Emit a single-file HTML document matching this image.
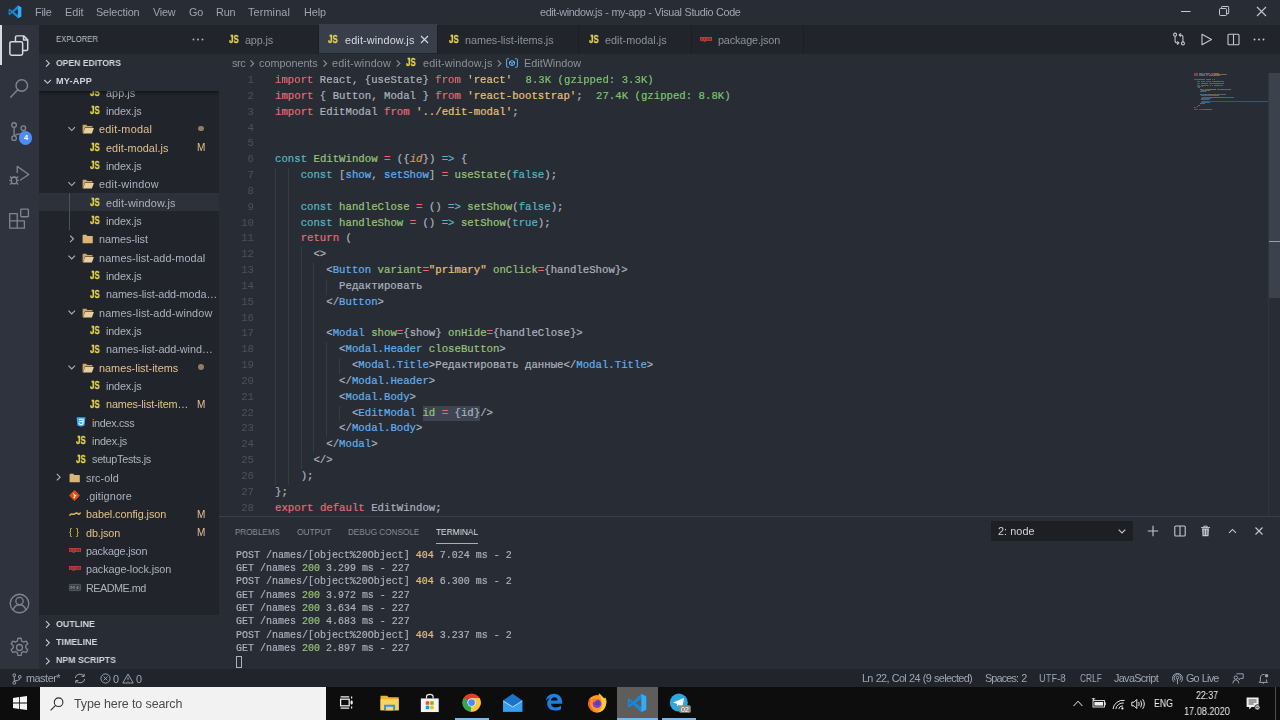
<!DOCTYPE html><html lang="en"><head><meta charset="utf-8"><title>edit-window.js - my-app - Visual Studio Code</title><style>

*{box-sizing:border-box;margin:0;padding:0}
html,body{width:1280px;height:720px;overflow:hidden;background:#282c34}
body{position:relative;font-family:"Liberation Sans",sans-serif;font-size:10.83px;color:#abb2bf;-webkit-font-smoothing:antialiased}
.abs{position:absolute}
.t{position:absolute;white-space:pre;line-height:1;will-change:transform}
.mono{font-family:"Liberation Mono",monospace}
#title{left:0;top:0;width:1280px;height:24.5px;background:#282c34}
#act{left:0;top:24.5px;width:39.4px;height:644.5px;background:#2f333d}
#side{left:39.4px;top:24.5px;width:179.6px;height:644.5px;background:#21252b;overflow:hidden}
#tabs{left:219px;top:24.5px;width:1061px;height:29.2px;background:#21252b}
#crumbs{left:219px;top:53.7px;width:1061px;height:18.8px;background:#282c34}
#editor{left:219px;top:72.5px;width:1061px;height:444px;background:#282c34;overflow:hidden}
#panel{left:219px;top:516px;width:1061px;height:153px;background:#282c34;border-top:1px solid #3a3f4b}
#status{left:0;top:669px;width:1280px;height:17.7px;background:#21252b}
#task{left:0;top:686.7px;width:1280px;height:33.3px;background:#0d0d0d}
.row{position:absolute;left:0;width:179px;height:18.33px}
.cl{-webkit-text-stroke:0.22px currentColor;position:absolute;left:0;height:15.83px;line-height:15.83px;white-space:pre;font-family:"Liberation Mono",monospace;font-size:11.4px;transform-origin:0 0}
.ln{position:absolute;height:15.83px;line-height:15.83px;white-space:pre;font-family:"Liberation Mono",monospace;font-size:11.4px;color:#495162;transform-origin:100% 0;text-align:right}
.k{color:#e06c75}.c{color:#56b6c2}.g{color:#98c379}.b{color:#61afef}.y{color:#e5c07b}.o{color:#d19a66;font-style:italic}.ic{color:#7cc36e}
.tl{-webkit-text-stroke:0.18px currentColor;position:absolute;left:0;height:13.33px;line-height:13.33px;white-space:pre;font-family:"Liberation Mono",monospace;font-size:11.2px;transform-origin:0 0;color:#abb2bf}
svg{position:absolute;overflow:visible}

</style></head><body>
<div id="title" class="abs">
<svg style="left:7.6px;top:5.4px" width="13.8" height="13.8" viewBox="0 0 100 100"><path d="M71 4 L30 42 L12 28 L4 32 L4 68 L12 72 L30 58 L71 96 L96 84 L96 16 Z M72 29 L72 71 L43 50 Z M12 40 L23 50 L12 60 Z" fill="#1b86d6" fill-rule="evenodd"/><path d="M72 4.5 L96 16 V84 L72 95.5 Z" fill="#33abf6"/></svg>
<span class="t" style="left:35.00px;top:4.62px;font-size:10.83px;line-height:14.08px;color:#9da5b4;letter-spacing:-0.237px;">File</span>
<span class="t" style="left:64.50px;top:4.62px;font-size:10.83px;line-height:14.08px;color:#9da5b4;letter-spacing:-0.040px;">Edit</span>
<span class="t" style="left:96.00px;top:4.62px;font-size:10.83px;line-height:14.08px;color:#9da5b4;letter-spacing:-0.117px;">Selection</span>
<span class="t" style="left:153.00px;top:4.62px;font-size:10.83px;line-height:14.08px;color:#9da5b4;letter-spacing:-0.194px;">View</span>
<span class="t" style="left:189.00px;top:4.62px;font-size:10.83px;line-height:14.08px;color:#9da5b4;letter-spacing:-0.223px;">Go</span>
<span class="t" style="left:216.00px;top:4.62px;font-size:10.83px;line-height:14.08px;color:#9da5b4;letter-spacing:-0.122px;">Run</span>
<span class="t" style="left:248.00px;top:4.62px;font-size:10.83px;line-height:14.08px;color:#9da5b4;letter-spacing:0.135px;">Terminal</span>
<span class="t" style="left:303.50px;top:4.62px;font-size:10.83px;line-height:14.08px;color:#9da5b4;letter-spacing:-0.068px;">Help</span>
<span class="t" style="left:539.50px;top:4.62px;font-size:10.83px;line-height:14.08px;color:#9da5b4;letter-spacing:-0.373px;word-spacing:0.373px;">edit-window.js - my-app - Visual Studio Code</span>
<svg style="left:1180px;top:6px" width="90" height="12" viewBox="0 0 90 12" fill="none" stroke="#c5c8ce" stroke-width="1"><path d="M1 5.5 H10.5"/><rect x="39.5" y="2.5" width="7" height="7" rx="1"/><path d="M41.5 2.5 V1.2 q0 -0.7 0.7 -0.7 H48 q0.7 0 0.7 0.7 V7 q0 0.7 -0.7 0.7 H46.5"/><path d="M77 1 L86 10 M86 1 L77 10" stroke-width="1.1"/></svg>
</div>
<div id="act" class="abs">
<div class="abs" style="left:0;top:0;width:1.7px;height:40px;background:#d7dae0"></div>
<svg style="left:8.7px;top:10.00px" width="21" height="21" viewBox="0 0 24 24" fill="none" stroke="#d7dae0" stroke-width="1.7" stroke-linejoin="round"><path d="M7.4 7.6 V2.6 q0 -1.6 1.6 -1.6 H16.8 L21.4 5.6 V16.2 q0 1.6 -1.6 1.6 H16"/><path d="M16.6 1.2 V5.8 H21.2"/><rect x="1" y="7.8" width="14.6" height="15.4" rx="2"/></svg>
<svg style="left:8.7px;top:53.33px" width="21" height="21" viewBox="0 0 24 24" fill="none" stroke="#7f8591" stroke-width="1.6"><circle cx="14.6" cy="8.6" r="6.6"/><path d="M10 13.4 L1.6 22.4"/></svg>
<svg style="left:8.7px;top:96.67px" width="21" height="21" viewBox="0 0 24 24" fill="none" stroke="#7f8591" stroke-width="1.5"><circle cx="5.8" cy="4.6" r="2.6"/><circle cx="5.8" cy="19.6" r="2.6"/><circle cx="16.4" cy="8.2" r="2.6"/><path d="M5.8 7.2 V17 M16.4 10.8 q0 3.6 -5 4.2 q-5 0.6 -5.6 2.4"/></svg>
<div class="abs" style="left:19.0px;top:106.80px;width:13.4px;height:13.4px;border-radius:7px;background:#4d8df5"></div>
<span class="t" style="left:23.50px;top:108.75px;font-size:7.6px;line-height:9.88px;color:#ffffff;letter-spacing:0.000px;font-weight:bold;">4</span>
<svg style="left:8.7px;top:140.00px" width="21" height="21" viewBox="0 0 24 24" fill="none" stroke="#7f8591" stroke-width="1.5" stroke-linejoin="round"><path d="M9.4 9 V1.6 L22.6 10.8 L12.6 17.4"/><ellipse cx="5.8" cy="17.6" rx="3.2" ry="3.8"/><path d="M3.4 14.8 q2.4 -2.6 4.8 0 M2.6 17.6 H0.4 M9 17.6 H11.2 M3.2 15.2 L1.2 13.2 M8.4 15.2 L10.4 13.2 M3.2 20.2 L1.2 22.2 M8.4 20.2 L10.4 22.2"/></svg>
<svg style="left:8.7px;top:183.33px" width="21" height="21" viewBox="0 0 24 24" fill="none" stroke="#7f8591" stroke-width="1.5" stroke-linejoin="round"><path d="M0.8 6.4 H9.4 V23 H0.8 Z M0.8 14.8 H17.6 V23 H9.4"/><rect x="13.4" y="1.2" width="8.8" height="8.8" rx="0.8"/></svg>
<svg style="left:8.7px;top:568.2px" width="21" height="21" viewBox="0 0 24 24" fill="none" stroke="#7f8591" stroke-width="1.5"><circle cx="12" cy="12" r="10.6"/><circle cx="12" cy="9.2" r="4.2"/><path d="M4.6 19.4 q2 -6 7.4 -6 q5.4 0 7.4 6"/></svg>
<svg style="left:8.7px;top:612px" width="21" height="21" viewBox="0 0 24 24" fill="none" stroke="#7f8591" stroke-width="1.5" stroke-linejoin="round"><circle cx="12" cy="12" r="3.4"/><path d="M10.2 1.4 h3.6 l0.7 3.2 l2.1 1.2 l3.1 -1.1 l1.8 3.1 l-2.4 2.2 v2.4 l2.4 2.2 l-1.8 3.1 l-3.1 -1.1 l-2.1 1.2 l-0.7 3.2 h-3.6 l-0.7 -3.2 l-2.1 -1.2 l-3.1 1.1 l-1.8 -3.1 l2.4 -2.2 v-2.4 l-2.4 -2.2 l1.8 -3.1 l3.1 1.1 l2.1 -1.2 z"/></svg>
</div>
<div id="side" class="abs"><div class="abs" style="left:-39.4px;top:-24.5px;width:1280px;height:720px">
<span class="t" style="left:89.80px;top:85.85px;font-size:10.2px;line-height:13.26px;color:#e6d64c;font-weight:bold;-webkit-text-stroke:0.3px #e6d64c;transform:scaleX(0.778);transform-origin:0 50%">JS</span>
<span class="t" style="left:105.80px;top:85.69px;font-size:10.83px;line-height:14.08px;color:#abb2bf;letter-spacing:0.050px;">app.js</span>
<span class="t" style="left:89.80px;top:104.19px;font-size:10.2px;line-height:13.26px;color:#e6d64c;font-weight:bold;-webkit-text-stroke:0.3px #e6d64c;transform:scaleX(0.778);transform-origin:0 50%">JS</span>
<span class="t" style="left:105.80px;top:104.02px;font-size:10.83px;line-height:14.08px;color:#abb2bf;letter-spacing:-0.159px;">index.js</span>
<svg style="left:0;top:0" width="1" height="1"><path d="M68.43 127.23 L71.73 130.53 L75.03 127.23" fill="none" stroke="#abb2bf" stroke-width="1.1"/></svg>
<svg style="left:82.33px;top:124.23px" width="12" height="10" viewBox="0 0 12 10"><path d="M0.6 9.2 V1.3 q0 -0.5 0.5 -0.5 H4.3 l1 1.1 H10 q0.5 0 0.5 0.5 V3.4 H3 L0.9 9.2 Z" fill="#c9a76a"/><path d="M3.1 4 H11.9 L9.9 9.4 H1 Z" fill="#e8cf9c"/></svg>
<span class="t" style="left:99.13px;top:122.36px;font-size:10.83px;line-height:14.08px;color:#e2c08d;letter-spacing:0.261px;">edit-modal</span>
<div class="abs" style="left:198.3px;top:125.83px;width:5.6px;height:5.6px;border-radius:3px;background:#8f7d5f"></div>
<span class="t" style="left:89.80px;top:140.85px;font-size:10.2px;line-height:13.26px;color:#e6d64c;font-weight:bold;-webkit-text-stroke:0.3px #e6d64c;transform:scaleX(0.778);transform-origin:0 50%">JS</span>
<span class="t" style="left:105.80px;top:140.69px;font-size:10.83px;line-height:14.08px;color:#e2c08d;letter-spacing:0.093px;">edit-modal.js</span>
<span class="t" style="left:196.50px;top:140.98px;font-size:10.0px;line-height:13.00px;color:#e2c08d;letter-spacing:0.670px;">M</span>
<span class="t" style="left:89.80px;top:159.19px;font-size:10.2px;line-height:13.26px;color:#e6d64c;font-weight:bold;-webkit-text-stroke:0.3px #e6d64c;transform:scaleX(0.778);transform-origin:0 50%">JS</span>
<span class="t" style="left:105.80px;top:159.02px;font-size:10.83px;line-height:14.08px;color:#abb2bf;letter-spacing:-0.159px;">index.js</span>
<svg style="left:0;top:0" width="1" height="1"><path d="M68.43 182.23 L71.73 185.53 L75.03 182.23" fill="none" stroke="#abb2bf" stroke-width="1.1"/></svg>
<svg style="left:82.33px;top:179.23px" width="12" height="10" viewBox="0 0 12 10"><path d="M0.6 9.2 V1.3 q0 -0.5 0.5 -0.5 H4.3 l1 1.1 H10 q0.5 0 0.5 0.5 V3.4 H3 L0.9 9.2 Z" fill="#c9a76a"/><path d="M3.1 4 H11.9 L9.9 9.4 H1 Z" fill="#e8cf9c"/></svg>
<span class="t" style="left:99.13px;top:177.36px;font-size:10.83px;line-height:14.08px;color:#abb2bf;letter-spacing:0.244px;">edit-window</span>
<div class="abs" style="left:39.4px;top:193.00px;width:179.6px;height:18.33px;background:#2c313a"></div>
<span class="t" style="left:89.80px;top:195.85px;font-size:10.2px;line-height:13.26px;color:#e6d64c;font-weight:bold;-webkit-text-stroke:0.3px #e6d64c;transform:scaleX(0.778);transform-origin:0 50%">JS</span>
<span class="t" style="left:105.80px;top:195.69px;font-size:10.83px;line-height:14.08px;color:#abb2bf;letter-spacing:0.163px;">edit-window.js</span>
<span class="t" style="left:89.80px;top:214.18px;font-size:10.2px;line-height:13.26px;color:#e6d64c;font-weight:bold;-webkit-text-stroke:0.3px #e6d64c;transform:scaleX(0.778);transform-origin:0 50%">JS</span>
<span class="t" style="left:105.80px;top:214.02px;font-size:10.83px;line-height:14.08px;color:#abb2bf;letter-spacing:-0.159px;">index.js</span>
<svg style="left:0;top:0" width="1" height="1"><path d="M70.13 235.53 L73.43 238.83 L70.13 242.13" fill="none" stroke="#abb2bf" stroke-width="1.1"/></svg>
<svg style="left:82.33px;top:234.23px" width="12" height="10" viewBox="0 0 12 10"><path d="M0.6 9.3 V1.3 q0 -0.5 0.5 -0.5 H4.3 l1 1.1 H10.3 q0.5 0 0.5 0.5 V9.3 Z" fill="#d9b577"/></svg>
<span class="t" style="left:99.13px;top:232.35px;font-size:10.83px;line-height:14.08px;color:#abb2bf;letter-spacing:-0.048px;">names-list</span>
<svg style="left:0;top:0" width="1" height="1"><path d="M68.43 255.56 L71.73 258.86 L75.03 255.56" fill="none" stroke="#abb2bf" stroke-width="1.1"/></svg>
<svg style="left:82.33px;top:252.56px" width="12" height="10" viewBox="0 0 12 10"><path d="M0.6 9.2 V1.3 q0 -0.5 0.5 -0.5 H4.3 l1 1.1 H10 q0.5 0 0.5 0.5 V3.4 H3 L0.9 9.2 Z" fill="#c9a76a"/><path d="M3.1 4 H11.9 L9.9 9.4 H1 Z" fill="#e8cf9c"/></svg>
<span class="t" style="left:99.13px;top:250.69px;font-size:10.83px;line-height:14.08px;color:#abb2bf;letter-spacing:0.112px;">names-list-add-modal</span>
<span class="t" style="left:89.80px;top:269.18px;font-size:10.2px;line-height:13.26px;color:#e6d64c;font-weight:bold;-webkit-text-stroke:0.3px #e6d64c;transform:scaleX(0.778);transform-origin:0 50%">JS</span>
<span class="t" style="left:105.80px;top:269.02px;font-size:10.83px;line-height:14.08px;color:#abb2bf;letter-spacing:-0.159px;">index.js</span>
<span class="t" style="left:89.80px;top:287.52px;font-size:10.2px;line-height:13.26px;color:#e6d64c;font-weight:bold;-webkit-text-stroke:0.3px #e6d64c;transform:scaleX(0.778);transform-origin:0 50%">JS</span>
<span class="t" style="left:105.80px;top:287.35px;font-size:10.83px;line-height:14.08px;color:#abb2bf;letter-spacing:-0.067px;">names-list-add-moda…</span>
<svg style="left:0;top:0" width="1" height="1"><path d="M68.43 310.56 L71.73 313.86 L75.03 310.56" fill="none" stroke="#abb2bf" stroke-width="1.1"/></svg>
<svg style="left:82.33px;top:307.56px" width="12" height="10" viewBox="0 0 12 10"><path d="M0.6 9.2 V1.3 q0 -0.5 0.5 -0.5 H4.3 l1 1.1 H10 q0.5 0 0.5 0.5 V3.4 H3 L0.9 9.2 Z" fill="#c9a76a"/><path d="M3.1 4 H11.9 L9.9 9.4 H1 Z" fill="#e8cf9c"/></svg>
<span class="t" style="left:99.13px;top:305.69px;font-size:10.83px;line-height:14.08px;color:#abb2bf;letter-spacing:0.125px;">names-list-add-window</span>
<span class="t" style="left:89.80px;top:324.18px;font-size:10.2px;line-height:13.26px;color:#e6d64c;font-weight:bold;-webkit-text-stroke:0.3px #e6d64c;transform:scaleX(0.778);transform-origin:0 50%">JS</span>
<span class="t" style="left:105.80px;top:324.02px;font-size:10.83px;line-height:14.08px;color:#abb2bf;letter-spacing:-0.159px;">index.js</span>
<span class="t" style="left:89.80px;top:342.52px;font-size:10.2px;line-height:13.26px;color:#e6d64c;font-weight:bold;-webkit-text-stroke:0.3px #e6d64c;transform:scaleX(0.778);transform-origin:0 50%">JS</span>
<span class="t" style="left:105.80px;top:342.35px;font-size:10.83px;line-height:14.08px;color:#abb2bf;letter-spacing:-0.051px;">names-list-add-wind…</span>
<svg style="left:0;top:0" width="1" height="1"><path d="M68.43 365.56 L71.73 368.86 L75.03 365.56" fill="none" stroke="#abb2bf" stroke-width="1.1"/></svg>
<svg style="left:82.33px;top:362.56px" width="12" height="10" viewBox="0 0 12 10"><path d="M0.6 9.2 V1.3 q0 -0.5 0.5 -0.5 H4.3 l1 1.1 H10 q0.5 0 0.5 0.5 V3.4 H3 L0.9 9.2 Z" fill="#c9a76a"/><path d="M3.1 4 H11.9 L9.9 9.4 H1 Z" fill="#e8cf9c"/></svg>
<span class="t" style="left:99.13px;top:360.69px;font-size:10.83px;line-height:14.08px;color:#e2c08d;letter-spacing:0.021px;">names-list-items</span>
<div class="abs" style="left:198.3px;top:364.16px;width:5.6px;height:5.6px;border-radius:3px;background:#8f7d5f"></div>
<span class="t" style="left:89.80px;top:379.18px;font-size:10.2px;line-height:13.26px;color:#e6d64c;font-weight:bold;-webkit-text-stroke:0.3px #e6d64c;transform:scaleX(0.778);transform-origin:0 50%">JS</span>
<span class="t" style="left:105.80px;top:379.02px;font-size:10.83px;line-height:14.08px;color:#abb2bf;letter-spacing:-0.159px;">index.js</span>
<span class="t" style="left:89.80px;top:397.51px;font-size:10.2px;line-height:13.26px;color:#e6d64c;font-weight:bold;-webkit-text-stroke:0.3px #e6d64c;transform:scaleX(0.778);transform-origin:0 50%">JS</span>
<span class="t" style="left:105.80px;top:397.35px;font-size:10.83px;line-height:14.08px;color:#e2c08d;letter-spacing:-0.128px;">names-list-item…</span>
<span class="t" style="left:196.50px;top:397.64px;font-size:10.0px;line-height:13.00px;color:#e2c08d;letter-spacing:0.670px;">M</span>
<svg style="left:75.67px;top:417.16px" width="10" height="10" viewBox="0 0 10 10"><path d="M0.6 0.3 H9.4 L8.6 8.6 L5 9.8 L1.4 8.6 Z" fill="#42a5f5"/><path d="M2.8 2.3 H7.3 L6.9 7 L5 7.6 L3.1 7 L3 5.9 M3.2 4.6 H7" fill="none" stroke="#fff" stroke-width="1"/></svg>
<span class="t" style="left:92.47px;top:415.68px;font-size:10.83px;line-height:14.08px;color:#abb2bf;letter-spacing:-0.323px;">index.css</span>
<span class="t" style="left:76.47px;top:434.18px;font-size:10.2px;line-height:13.26px;color:#e6d64c;font-weight:bold;-webkit-text-stroke:0.3px #e6d64c;transform:scaleX(0.778);transform-origin:0 50%">JS</span>
<span class="t" style="left:92.47px;top:434.02px;font-size:10.83px;line-height:14.08px;color:#abb2bf;letter-spacing:-0.211px;">index.js</span>
<span class="t" style="left:76.47px;top:452.51px;font-size:10.2px;line-height:13.26px;color:#e6d64c;font-weight:bold;-webkit-text-stroke:0.3px #e6d64c;transform:scaleX(0.778);transform-origin:0 50%">JS</span>
<span class="t" style="left:92.47px;top:452.35px;font-size:10.83px;line-height:14.08px;color:#abb2bf;letter-spacing:-0.282px;">setupTests.js</span>
<svg style="left:0;top:0" width="1" height="1"><path d="M56.80 473.86 L60.10 477.16 L56.80 480.46" fill="none" stroke="#abb2bf" stroke-width="1.1"/></svg>
<svg style="left:69.00px;top:472.56px" width="12" height="10" viewBox="0 0 12 10"><path d="M0.6 9.3 V1.3 q0 -0.5 0.5 -0.5 H4.3 l1 1.1 H10.3 q0.5 0 0.5 0.5 V9.3 Z" fill="#d9b577"/></svg>
<span class="t" style="left:85.80px;top:470.68px;font-size:10.83px;line-height:14.08px;color:#abb2bf;letter-spacing:0.030px;">src-old</span>
<svg style="left:69.00px;top:489.99px" width="11" height="11" viewBox="0 0 11 11"><rect x="1.6" y="1.6" width="7.8" height="7.8" rx="0.8" transform="rotate(45 5.5 5.5)" fill="#e64a19"/><path d="M4 3.2 L6.3 5.5 M5.3 4.5 V7.6" stroke="#fff" stroke-width="0.9" fill="none"/><circle cx="6.6" cy="5.7" r="0.8" fill="#fff"/><circle cx="5.3" cy="7.6" r="0.8" fill="#fff"/></svg>
<span class="t" style="left:85.80px;top:489.02px;font-size:10.83px;line-height:14.08px;color:#abb2bf;letter-spacing:0.145px;">.gitignore</span>
<svg style="left:69.00px;top:510.83px" width="12" height="6" viewBox="0 0 12 6"><path d="M0.5 4.6 q1.5 -2.2 3 -1.5 t2.8 -0.6 t2.6 0.2 t2.6 -1.2" fill="none" stroke="#e4c34f" stroke-width="1.5"/></svg>
<span class="t" style="left:85.80px;top:507.35px;font-size:10.83px;line-height:14.08px;color:#e2c08d;letter-spacing:-0.063px;">babel.config.json</span>
<span class="t" style="left:196.50px;top:507.64px;font-size:10.0px;line-height:13.00px;color:#e2c08d;letter-spacing:0.670px;">M</span>
<span class="t" style="left:69.30px;top:526.23px;font-size:9.6px;line-height:12.48px;color:#e5c64a;letter-spacing:0.960px;word-spacing:-0.960px;">{ }</span>
<span class="t" style="left:85.80px;top:525.68px;font-size:10.83px;line-height:14.08px;color:#e2c08d;letter-spacing:-0.103px;">db.json</span>
<span class="t" style="left:196.50px;top:525.97px;font-size:10.0px;line-height:13.00px;color:#e2c08d;letter-spacing:0.670px;">M</span>
<svg style="left:69.00px;top:548.09px" width="12" height="5" viewBox="0 0 12 5"><rect x="0" y="0" width="12" height="3.9" fill="#b83c3b"/><rect x="3.3" y="3.8" width="2.7" height="0.9" fill="#b83c3b"/><path d="M1.6 1 V3 M4.4 1 V3 M7.3 1 V3 M9 1 V3 M10.4 1 V3" stroke="#5a2426" stroke-width="0.7"/></svg>
<span class="t" style="left:85.80px;top:544.02px;font-size:10.83px;line-height:14.08px;color:#abb2bf;letter-spacing:-0.218px;">package.json</span>
<svg style="left:69.00px;top:566.42px" width="12" height="5" viewBox="0 0 12 5"><rect x="0" y="0" width="12" height="3.9" fill="#b83c3b"/><rect x="3.3" y="3.8" width="2.7" height="0.9" fill="#b83c3b"/><path d="M1.6 1 V3 M4.4 1 V3 M7.3 1 V3 M9 1 V3 M10.4 1 V3" stroke="#5a2426" stroke-width="0.7"/></svg>
<span class="t" style="left:85.80px;top:562.35px;font-size:10.83px;line-height:14.08px;color:#abb2bf;letter-spacing:-0.087px;">package-lock.json</span>
<svg style="left:69.00px;top:583.86px" width="12" height="7" viewBox="0 0 12 7"><rect x="0.4" y="0.4" width="11.2" height="6.2" rx="0.8" fill="#3c4049" stroke="#6a707c" stroke-width="0.6"/><path d="M2.2 5 V2.2 L3.6 3.8 L5 2.2 V5 M8.6 2 V4.6 M7.4 3.6 L8.6 4.9 L9.8 3.6" fill="none" stroke="#8a909c" stroke-width="0.8"/></svg>
<span class="t" style="left:85.80px;top:580.68px;font-size:10.83px;line-height:14.08px;color:#abb2bf;letter-spacing:-0.521px;">README.md</span>
<div class="abs" style="left:69.3px;top:193px;width:1px;height:36.6px;background:#4b5160"></div>
<div class="abs" style="left:39.4px;top:24.5px;width:179.6px;height:66.3px;background:#282c34;box-shadow:0 2px 3px rgba(0,0,0,0.45)"></div>
<div class="abs" style="left:39.4px;top:24.5px;width:179.6px;height:29.2px;background:#21252b"></div>
<span class="t" style="left:56.00px;top:33.46px;font-size:9.3px;line-height:12.09px;color:#bcc2cc;transform:scaleX(0.8292);transform-origin:0 50%;">EXPLORER</span>
<svg style="left:191.5px;top:37.6px" width="12" height="3" viewBox="0 0 12 3" fill="#abb2bf"><circle cx="1.5" cy="1.5" r="0.95"/><circle cx="6" cy="1.5" r="0.95"/><circle cx="10.5" cy="1.5" r="0.95"/></svg>
<svg style="left:0;top:0" width="1" height="1"><path d="M46.00 60.10 L49.30 63.40 L46.00 66.70" fill="none" stroke="#c5cad3" stroke-width="1.1"/></svg>
<span class="t" style="left:56.00px;top:57.64px;font-size:9.17px;line-height:11.92px;color:#d0d4dc;transform:scaleX(0.9403);transform-origin:0 50%;font-weight:bold;">OPEN EDITORS</span>
<svg style="left:0;top:0" width="1" height="1"><path d="M44.30 80.00 L47.60 83.30 L50.90 80.00" fill="none" stroke="#c5cad3" stroke-width="1.1"/></svg>
<span class="t" style="left:56.00px;top:75.74px;font-size:9.17px;line-height:11.92px;color:#d0d4dc;letter-spacing:0.140px;font-weight:bold;">MY-APP</span>
<div class="abs" style="left:39.4px;top:615.0px;width:179.6px;height:55px;background:#282c34"></div>
<svg style="left:0;top:0" width="1" height="1"><path d="M46.00 621.17 L49.30 624.47 L46.00 627.77" fill="none" stroke="#c5cad3" stroke-width="1.1"/></svg>
<span class="t" style="left:56.00px;top:618.61px;font-size:9.17px;line-height:11.92px;color:#d0d4dc;transform:scaleX(0.9691);transform-origin:0 50%;font-weight:bold;">OUTLINE</span>
<svg style="left:0;top:0" width="1" height="1"><path d="M46.00 639.50 L49.30 642.80 L46.00 646.10" fill="none" stroke="#c5cad3" stroke-width="1.1"/></svg>
<span class="t" style="left:56.00px;top:636.94px;font-size:9.17px;line-height:11.92px;color:#d0d4dc;transform:scaleX(0.9698);transform-origin:0 50%;font-weight:bold;">TIMELINE</span>
<svg style="left:0;top:0" width="1" height="1"><path d="M46.00 657.83 L49.30 661.13 L46.00 664.43" fill="none" stroke="#c5cad3" stroke-width="1.1"/></svg>
<span class="t" style="left:56.00px;top:655.28px;font-size:9.17px;line-height:11.92px;color:#d0d4dc;transform:scaleX(0.9574);transform-origin:0 50%;font-weight:bold;">NPM SCRIPTS</span>
</div></div>
<div id="tabs" class="abs"><div class="abs" style="left:-219px;top:-24.5px;width:1280px;height:720px">
<div class="abs" style="left:318.75px;top:24.3px;width:118.75px;height:29.2px;background:#383e4a"></div>
<div class="abs" style="left:318.25px;top:24.5px;width:1px;height:29.2px;background:#1b1e23"></div>
<div class="abs" style="left:437.00px;top:24.5px;width:1px;height:29.2px;background:#1b1e23"></div>
<div class="abs" style="left:578.00px;top:24.5px;width:1px;height:29.2px;background:#1b1e23"></div>
<div class="abs" style="left:691.20px;top:24.5px;width:1px;height:29.2px;background:#1b1e23"></div>
<div class="abs" style="left:803.40px;top:24.5px;width:1px;height:29.2px;background:#1b1e23"></div>
<span class="t" style="left:228.80px;top:32.79px;font-size:10.2px;line-height:13.26px;color:#e6d64c;font-weight:bold;-webkit-text-stroke:0.3px #e6d64c;transform:scaleX(0.778);transform-origin:0 50%">JS</span>
<span class="t" style="left:245.00px;top:32.82px;font-size:10.83px;line-height:14.08px;color:#8b919d;letter-spacing:-0.150px;">app.js</span>
<span class="t" style="left:328.20px;top:32.79px;font-size:10.2px;line-height:13.26px;color:#e6d64c;font-weight:bold;-webkit-text-stroke:0.3px #e6d64c;transform:scaleX(0.778);transform-origin:0 50%">JS</span>
<span class="t" style="left:345.00px;top:32.82px;font-size:10.83px;line-height:14.08px;color:#d7dae0;letter-spacing:0.149px;">edit-window.js</span>
<svg style="left:419.5px;top:34.5px" width="9" height="9" viewBox="0 0 9 9"><path d="M1 1 L8 8 M8 1 L1 8" stroke="#d7dae0" stroke-width="1.1"/></svg>
<span class="t" style="left:449.20px;top:32.79px;font-size:10.2px;line-height:13.26px;color:#e6d64c;font-weight:bold;-webkit-text-stroke:0.3px #e6d64c;transform:scaleX(0.778);transform-origin:0 50%">JS</span>
<span class="t" style="left:465.30px;top:32.82px;font-size:10.83px;line-height:14.08px;color:#8b919d;letter-spacing:-0.056px;">names-list-items.js</span>
<span class="t" style="left:588.60px;top:32.79px;font-size:10.2px;line-height:13.26px;color:#e6d64c;font-weight:bold;-webkit-text-stroke:0.3px #e6d64c;transform:scaleX(0.778);transform-origin:0 50%">JS</span>
<span class="t" style="left:605.40px;top:32.82px;font-size:10.83px;line-height:14.08px;color:#8b919d;letter-spacing:0.016px;">edit-modal.js</span>
<svg style="left:700.00px;top:36.60px" width="12" height="5" viewBox="0 0 12 5"><rect x="0" y="0" width="12" height="3.9" fill="#b83c3b"/><rect x="3.3" y="3.8" width="2.7" height="0.9" fill="#b83c3b"/><path d="M1.6 1 V3 M4.4 1 V3 M7.3 1 V3 M9 1 V3 M10.4 1 V3" stroke="#5a2426" stroke-width="0.7"/></svg>
<span class="t" style="left:717.90px;top:32.82px;font-size:10.83px;line-height:14.08px;color:#8b919d;letter-spacing:-0.151px;">package.json</span>
<svg style="left:1172px;top:32px" width="14" height="14" viewBox="0 0 16 16" fill="none" stroke="#c5c8ce" stroke-width="1.2"><circle cx="3.5" cy="3" r="1.7"/><circle cx="12.5" cy="13" r="1.7"/><path d="M3.5 4.7 V10 q0 2.5 2.5 2.5 H7.5 M6 10.7 L7.8 12.5 L6 14.3 M12.5 11.3 V6 q0 -2.5 -2.5 -2.5 H8.5 M10 1.7 L8.2 3.5 L10 5.3"/></svg>
<svg style="left:1200px;top:32.5px" width="13" height="13" viewBox="0 0 13 13" fill="none" stroke="#c5c8ce" stroke-width="1.1" stroke-linejoin="round"><path d="M2 1.2 L11.5 6.5 L2 11.8 Z"/></svg>
<svg style="left:1226.5px;top:32.5px" width="13" height="13" viewBox="0 0 13 13" fill="none" stroke="#c5c8ce" stroke-width="1.1"><rect x="1" y="1.2" width="11" height="10.6" rx="1"/><path d="M6.5 1.2 V11.8"/></svg>
<svg style="left:1253px;top:37.6px" width="12" height="3" viewBox="0 0 12 3" fill="#c5c8ce"><circle cx="1.5" cy="1.5" r="0.95"/><circle cx="6" cy="1.5" r="0.95"/><circle cx="10.5" cy="1.5" r="0.95"/></svg>
</div></div>
<div id="crumbs" class="abs"><div class="abs" style="left:-219px;top:-53.7px;width:1280px;height:720px">
<span class="t" style="left:231.75px;top:55.62px;font-size:10.83px;line-height:14.08px;color:#8b919d;letter-spacing:-0.395px;">src</span>
<svg style="left:0;top:0" width="1" height="1"><path d="M250.48 60.37 L253.62 63.50 L250.48 66.64" fill="none" stroke="#8b919d" stroke-width="1.1"/></svg>
<span class="t" style="left:258.75px;top:55.62px;font-size:10.83px;line-height:14.08px;color:#8b919d;letter-spacing:-0.024px;">components</span>
<svg style="left:0;top:0" width="1" height="1"><path d="M323.48 60.37 L326.62 63.50 L323.48 66.64" fill="none" stroke="#8b919d" stroke-width="1.1"/></svg>
<span class="t" style="left:331.75px;top:55.62px;font-size:10.83px;line-height:14.08px;color:#8b919d;letter-spacing:0.165px;">edit-window</span>
<svg style="left:0;top:0" width="1" height="1"><path d="M396.73 60.37 L399.87 63.50 L396.73 66.64" fill="none" stroke="#8b919d" stroke-width="1.1"/></svg>
<span class="t" style="left:406.40px;top:56.29px;font-size:10.2px;line-height:13.26px;color:#e6d64c;font-weight:bold;-webkit-text-stroke:0.3px #e6d64c;transform:scaleX(0.778);transform-origin:0 50%">JS</span>
<span class="t" style="left:422.50px;top:55.62px;font-size:10.83px;line-height:14.08px;color:#8b919d;letter-spacing:0.149px;">edit-window.js</span>
<svg style="left:0;top:0" width="1" height="1"><path d="M497.73 60.37 L500.87 63.50 L497.73 66.64" fill="none" stroke="#8b919d" stroke-width="1.1"/></svg>
<svg style="left:506px;top:58.20px" width="12" height="10" viewBox="0 0 12 10" fill="none" stroke="#61afef" stroke-width="1"><path d="M3 0.8 H1.2 q-0.6 0 -0.6 0.6 V8.6 q0 0.6 0.6 0.6 H3 M9 0.8 H10.8 q0.6 0 0.6 0.6 V8.6 q0 0.6 -0.6 0.6 H9"/><path d="M6 2.5 L8.5 3.8 V6.4 L6 7.7 L3.5 6.4 V3.8 Z M3.5 3.8 L6 5.1 L8.5 3.8 M6 5.1 V7.7"/></svg>
<span class="t" style="left:524.30px;top:55.62px;font-size:10.83px;line-height:14.08px;color:#8b919d;letter-spacing:-0.008px;">EditWindow</span>
</div></div>
<div id="editor" class="abs"><div class="abs" style="left:-219px;top:-72.5px;width:1280px;height:720px">
<div class="abs" style="left:422.54px;top:405.60px;width:57.73px;height:15.83px;background:#3e4451"></div>
<div class="abs" style="left:275.00px;top:168.10px;width:1px;height:316.67px;background:#363b45"></div>
<div class="abs" style="left:287.83px;top:168.10px;width:1px;height:316.67px;background:#363b45"></div>
<div class="abs" style="left:300.66px;top:247.27px;width:1px;height:221.67px;background:#363b45"></div>
<div class="abs" style="left:313.49px;top:263.10px;width:1px;height:190.00px;background:#363b45"></div>
<div class="abs" style="left:326.32px;top:278.93px;width:1px;height:15.83px;background:#363b45"></div>
<div class="abs" style="left:326.32px;top:342.27px;width:1px;height:95.00px;background:#363b45"></div>
<div class="abs" style="left:339.15px;top:358.10px;width:1px;height:15.83px;background:#363b45"></div>
<div class="abs" style="left:339.15px;top:405.60px;width:1px;height:15.83px;background:#363b45"></div>
<div class="ln" style="left:224.00px;width:30px;top:73.10px;transform:scaleX(0.9377)">1</div>
<div class="cl" style="left:275.0px;top:73.10px;transform:scaleX(0.9377)"><span class="k">import</span> React, {useState} <span class="k">from</span> <span class="y">'react'</span><span class="ic" style="margin-left:14.22px">8.3K (gzipped: 3.3K)</span></div>
<div class="ln" style="left:224.00px;width:30px;top:88.93px;transform:scaleX(0.9377)">2</div>
<div class="cl" style="left:275.0px;top:88.93px;transform:scaleX(0.9377)"><span class="k">import</span> { Button, Modal } <span class="k">from</span> <span class="y">'react-bootstrap'</span>;<span class="ic" style="margin-left:14.22px">27.4K (gzipped: 8.8K)</span></div>
<div class="ln" style="left:224.00px;width:30px;top:104.77px;transform:scaleX(0.9377)">3</div>
<div class="cl" style="left:275.0px;top:104.77px;transform:scaleX(0.9377)"><span class="k">import</span> EditModal <span class="k">from</span> <span class="y">'../edit-modal'</span>;</div>
<div class="ln" style="left:224.00px;width:30px;top:120.60px;transform:scaleX(0.9377)">4</div>
<div class="ln" style="left:224.00px;width:30px;top:136.43px;transform:scaleX(0.9377)">5</div>
<div class="ln" style="left:224.00px;width:30px;top:152.27px;transform:scaleX(0.9377)">6</div>
<div class="cl" style="left:275.0px;top:152.27px;transform:scaleX(0.9377)"><span class="c">const</span> <span class="g">EditWindow</span> <span class="k">=</span> ({<span class="o">id</span>}) <span class="c">=&gt;</span> {</div>
<div class="ln" style="left:224.00px;width:30px;top:168.10px;transform:scaleX(0.9377)">7</div>
<div class="cl" style="left:275.0px;top:168.10px;transform:scaleX(0.9377)">    <span class="c">const</span> [<span class="b">show</span>, <span class="b">setShow</span>] <span class="k">=</span> <span class="g">useState</span>(<span class="c">false</span>);</div>
<div class="ln" style="left:224.00px;width:30px;top:183.93px;transform:scaleX(0.9377)">8</div>
<div class="ln" style="left:224.00px;width:30px;top:199.77px;transform:scaleX(0.9377)">9</div>
<div class="cl" style="left:275.0px;top:199.77px;transform:scaleX(0.9377)">    <span class="c">const</span> <span class="g">handleClose</span> <span class="k">=</span> () <span class="c">=&gt;</span> <span class="g">setShow</span>(<span class="c">false</span>);</div>
<div class="ln" style="left:224.00px;width:30px;top:215.60px;transform:scaleX(0.9377)">10</div>
<div class="cl" style="left:275.0px;top:215.60px;transform:scaleX(0.9377)">    <span class="c">const</span> <span class="g">handleShow</span> <span class="k">=</span> () <span class="c">=&gt;</span> <span class="g">setShow</span>(<span class="c">true</span>);</div>
<div class="ln" style="left:224.00px;width:30px;top:231.43px;transform:scaleX(0.9377)">11</div>
<div class="cl" style="left:275.0px;top:231.43px;transform:scaleX(0.9377)">    <span class="k">return</span> (</div>
<div class="ln" style="left:224.00px;width:30px;top:247.27px;transform:scaleX(0.9377)">12</div>
<div class="cl" style="left:275.0px;top:247.27px;transform:scaleX(0.9377)">      &lt;&gt;</div>
<div class="ln" style="left:224.00px;width:30px;top:263.10px;transform:scaleX(0.9377)">13</div>
<div class="cl" style="left:275.0px;top:263.10px;transform:scaleX(0.9377)">        &lt;<span class="b">Button</span> <span class="g">variant</span><span class="k">=</span><span class="y">"primary"</span> <span class="g">onClick</span><span class="k">=</span>{handleShow}&gt;</div>
<div class="ln" style="left:224.00px;width:30px;top:278.93px;transform:scaleX(0.9377)">14</div>
<div class="cl" style="left:275.0px;top:278.93px;transform:scaleX(0.9377)">          Редактировать</div>
<div class="ln" style="left:224.00px;width:30px;top:294.77px;transform:scaleX(0.9377)">15</div>
<div class="cl" style="left:275.0px;top:294.77px;transform:scaleX(0.9377)">        &lt;/<span class="b">Button</span>&gt;</div>
<div class="ln" style="left:224.00px;width:30px;top:310.60px;transform:scaleX(0.9377)">16</div>
<div class="ln" style="left:224.00px;width:30px;top:326.43px;transform:scaleX(0.9377)">17</div>
<div class="cl" style="left:275.0px;top:326.43px;transform:scaleX(0.9377)">        &lt;<span class="b">Modal</span> <span class="g">show</span><span class="k">=</span>{show} <span class="g">onHide</span><span class="k">=</span>{handleClose}&gt;</div>
<div class="ln" style="left:224.00px;width:30px;top:342.27px;transform:scaleX(0.9377)">18</div>
<div class="cl" style="left:275.0px;top:342.27px;transform:scaleX(0.9377)">          &lt;<span class="b">Modal.Header</span> <span class="g">closeButton</span>&gt;</div>
<div class="ln" style="left:224.00px;width:30px;top:358.10px;transform:scaleX(0.9377)">19</div>
<div class="cl" style="left:275.0px;top:358.10px;transform:scaleX(0.9377)">            &lt;<span class="b">Modal.Title</span>&gt;Редактировать данные&lt;/<span class="b">Modal.Title</span>&gt;</div>
<div class="ln" style="left:224.00px;width:30px;top:373.93px;transform:scaleX(0.9377)">20</div>
<div class="cl" style="left:275.0px;top:373.93px;transform:scaleX(0.9377)">          &lt;/<span class="b">Modal.Header</span>&gt;</div>
<div class="ln" style="left:224.00px;width:30px;top:389.77px;transform:scaleX(0.9377)">21</div>
<div class="cl" style="left:275.0px;top:389.77px;transform:scaleX(0.9377)">          &lt;<span class="b">Modal.Body</span>&gt;</div>
<div class="ln" style="left:224.00px;width:30px;top:405.60px;transform:scaleX(0.9377)">22</div>
<div class="cl" style="left:275.0px;top:405.60px;transform:scaleX(0.9377)">            &lt;<span class="b">EditModal</span> <span class="g">id</span> <span class="k">=</span> {id}/&gt;</div>
<div class="ln" style="left:224.00px;width:30px;top:421.43px;transform:scaleX(0.9377)">23</div>
<div class="cl" style="left:275.0px;top:421.43px;transform:scaleX(0.9377)">          &lt;/<span class="b">Modal.Body</span>&gt;</div>
<div class="ln" style="left:224.00px;width:30px;top:437.27px;transform:scaleX(0.9377)">24</div>
<div class="cl" style="left:275.0px;top:437.27px;transform:scaleX(0.9377)">        &lt;/<span class="b">Modal</span>&gt;</div>
<div class="ln" style="left:224.00px;width:30px;top:453.10px;transform:scaleX(0.9377)">25</div>
<div class="cl" style="left:275.0px;top:453.10px;transform:scaleX(0.9377)">      &lt;/&gt;</div>
<div class="ln" style="left:224.00px;width:30px;top:468.93px;transform:scaleX(0.9377)">26</div>
<div class="cl" style="left:275.0px;top:468.93px;transform:scaleX(0.9377)">    );</div>
<div class="ln" style="left:224.00px;width:30px;top:484.77px;transform:scaleX(0.9377)">27</div>
<div class="cl" style="left:275.0px;top:484.77px;transform:scaleX(0.9377)">};</div>
<div class="ln" style="left:224.00px;width:30px;top:500.60px;transform:scaleX(0.9377)">28</div>
<div class="cl" style="left:275.0px;top:500.60px;transform:scaleX(0.9377)"><span class="k">export</span> <span class="k">default</span> EditWindow;</div>
<div class="abs" style="left:1194.30px;top:72.70px;width:4.00px;height:1.1px;background:#a8545c;opacity:0.62"></div>
<div class="abs" style="left:1198.97px;top:72.70px;width:4.00px;height:1.1px;background:#7e8490;opacity:0.62"></div>
<div class="abs" style="left:1203.64px;top:72.70px;width:6.67px;height:1.1px;background:#7e8490;opacity:0.62"></div>
<div class="abs" style="left:1210.97px;top:72.70px;width:2.67px;height:1.1px;background:#a8545c;opacity:0.62"></div>
<div class="abs" style="left:1214.31px;top:72.70px;width:4.67px;height:1.1px;background:#ab905e;opacity:0.62"></div>
<div class="abs" style="left:1194.30px;top:74.03px;width:4.00px;height:1.1px;background:#a8545c;opacity:0.62"></div>
<div class="abs" style="left:1198.97px;top:74.03px;width:0.67px;height:1.1px;background:#7e8490;opacity:0.62"></div>
<div class="abs" style="left:1200.30px;top:74.03px;width:4.67px;height:1.1px;background:#7e8490;opacity:0.62"></div>
<div class="abs" style="left:1205.64px;top:74.03px;width:3.33px;height:1.1px;background:#7e8490;opacity:0.62"></div>
<div class="abs" style="left:1209.64px;top:74.03px;width:0.67px;height:1.1px;background:#7e8490;opacity:0.62"></div>
<div class="abs" style="left:1210.97px;top:74.03px;width:2.67px;height:1.1px;background:#a8545c;opacity:0.62"></div>
<div class="abs" style="left:1214.31px;top:74.03px;width:11.34px;height:1.1px;background:#ab905e;opacity:0.62"></div>
<div class="abs" style="left:1225.65px;top:74.03px;width:0.67px;height:1.1px;background:#7e8490;opacity:0.62"></div>
<div class="abs" style="left:1194.30px;top:75.37px;width:4.00px;height:1.1px;background:#a8545c;opacity:0.62"></div>
<div class="abs" style="left:1198.97px;top:75.37px;width:6.00px;height:1.1px;background:#7e8490;opacity:0.62"></div>
<div class="abs" style="left:1205.64px;top:75.37px;width:2.67px;height:1.1px;background:#a8545c;opacity:0.62"></div>
<div class="abs" style="left:1208.97px;top:75.37px;width:10.01px;height:1.1px;background:#ab905e;opacity:0.62"></div>
<div class="abs" style="left:1218.98px;top:75.37px;width:0.67px;height:1.1px;background:#7e8490;opacity:0.62"></div>
<div class="abs" style="left:1194.30px;top:79.37px;width:3.33px;height:1.1px;background:#448a93;opacity:0.62"></div>
<div class="abs" style="left:1198.30px;top:79.37px;width:6.67px;height:1.1px;background:#73935c;opacity:0.62"></div>
<div class="abs" style="left:1205.64px;top:79.37px;width:0.67px;height:1.1px;background:#a8545c;opacity:0.62"></div>
<div class="abs" style="left:1206.97px;top:79.37px;width:1.33px;height:1.1px;background:#7e8490;opacity:0.62"></div>
<div class="abs" style="left:1208.31px;top:79.37px;width:1.33px;height:1.1px;background:#9c744e;opacity:0.62"></div>
<div class="abs" style="left:1209.64px;top:79.37px;width:1.33px;height:1.1px;background:#7e8490;opacity:0.62"></div>
<div class="abs" style="left:1211.64px;top:79.37px;width:1.33px;height:1.1px;background:#448a93;opacity:0.62"></div>
<div class="abs" style="left:1213.64px;top:79.37px;width:0.67px;height:1.1px;background:#7e8490;opacity:0.62"></div>
<div class="abs" style="left:1196.97px;top:80.70px;width:3.33px;height:1.1px;background:#448a93;opacity:0.62"></div>
<div class="abs" style="left:1200.97px;top:80.70px;width:0.67px;height:1.1px;background:#7e8490;opacity:0.62"></div>
<div class="abs" style="left:1201.64px;top:80.70px;width:2.67px;height:1.1px;background:#4a84b4;opacity:0.62"></div>
<div class="abs" style="left:1204.31px;top:80.70px;width:0.67px;height:1.1px;background:#7e8490;opacity:0.62"></div>
<div class="abs" style="left:1205.64px;top:80.70px;width:4.67px;height:1.1px;background:#4a84b4;opacity:0.62"></div>
<div class="abs" style="left:1210.31px;top:80.70px;width:0.67px;height:1.1px;background:#7e8490;opacity:0.62"></div>
<div class="abs" style="left:1211.64px;top:80.70px;width:0.67px;height:1.1px;background:#a8545c;opacity:0.62"></div>
<div class="abs" style="left:1212.98px;top:80.70px;width:5.34px;height:1.1px;background:#73935c;opacity:0.62"></div>
<div class="abs" style="left:1218.31px;top:80.70px;width:0.67px;height:1.1px;background:#7e8490;opacity:0.62"></div>
<div class="abs" style="left:1218.98px;top:80.70px;width:3.33px;height:1.1px;background:#448a93;opacity:0.62"></div>
<div class="abs" style="left:1222.31px;top:80.70px;width:1.33px;height:1.1px;background:#7e8490;opacity:0.62"></div>
<div class="abs" style="left:1196.97px;top:83.37px;width:3.33px;height:1.1px;background:#448a93;opacity:0.62"></div>
<div class="abs" style="left:1200.97px;top:83.37px;width:7.34px;height:1.1px;background:#73935c;opacity:0.62"></div>
<div class="abs" style="left:1208.97px;top:83.37px;width:0.67px;height:1.1px;background:#a8545c;opacity:0.62"></div>
<div class="abs" style="left:1210.31px;top:83.37px;width:1.33px;height:1.1px;background:#7e8490;opacity:0.62"></div>
<div class="abs" style="left:1212.31px;top:83.37px;width:1.33px;height:1.1px;background:#448a93;opacity:0.62"></div>
<div class="abs" style="left:1214.31px;top:83.37px;width:4.67px;height:1.1px;background:#73935c;opacity:0.62"></div>
<div class="abs" style="left:1218.98px;top:83.37px;width:0.67px;height:1.1px;background:#7e8490;opacity:0.62"></div>
<div class="abs" style="left:1219.65px;top:83.37px;width:3.33px;height:1.1px;background:#448a93;opacity:0.62"></div>
<div class="abs" style="left:1222.98px;top:83.37px;width:1.33px;height:1.1px;background:#7e8490;opacity:0.62"></div>
<div class="abs" style="left:1196.97px;top:84.70px;width:3.33px;height:1.1px;background:#448a93;opacity:0.62"></div>
<div class="abs" style="left:1200.97px;top:84.70px;width:6.67px;height:1.1px;background:#73935c;opacity:0.62"></div>
<div class="abs" style="left:1208.31px;top:84.70px;width:0.67px;height:1.1px;background:#a8545c;opacity:0.62"></div>
<div class="abs" style="left:1209.64px;top:84.70px;width:1.33px;height:1.1px;background:#7e8490;opacity:0.62"></div>
<div class="abs" style="left:1211.64px;top:84.70px;width:1.33px;height:1.1px;background:#448a93;opacity:0.62"></div>
<div class="abs" style="left:1213.64px;top:84.70px;width:4.67px;height:1.1px;background:#73935c;opacity:0.62"></div>
<div class="abs" style="left:1218.31px;top:84.70px;width:0.67px;height:1.1px;background:#7e8490;opacity:0.62"></div>
<div class="abs" style="left:1218.98px;top:84.70px;width:2.67px;height:1.1px;background:#448a93;opacity:0.62"></div>
<div class="abs" style="left:1221.65px;top:84.70px;width:1.33px;height:1.1px;background:#7e8490;opacity:0.62"></div>
<div class="abs" style="left:1196.97px;top:86.03px;width:4.00px;height:1.1px;background:#a8545c;opacity:0.62"></div>
<div class="abs" style="left:1201.64px;top:86.03px;width:0.67px;height:1.1px;background:#7e8490;opacity:0.62"></div>
<div class="abs" style="left:1198.30px;top:87.37px;width:1.33px;height:1.1px;background:#7e8490;opacity:0.62"></div>
<div class="abs" style="left:1199.64px;top:88.70px;width:0.67px;height:1.1px;background:#7e8490;opacity:0.62"></div>
<div class="abs" style="left:1200.30px;top:88.70px;width:4.00px;height:1.1px;background:#4a84b4;opacity:0.62"></div>
<div class="abs" style="left:1204.97px;top:88.70px;width:4.67px;height:1.1px;background:#73935c;opacity:0.62"></div>
<div class="abs" style="left:1209.64px;top:88.70px;width:0.67px;height:1.1px;background:#a8545c;opacity:0.62"></div>
<div class="abs" style="left:1210.31px;top:88.70px;width:6.00px;height:1.1px;background:#ab905e;opacity:0.62"></div>
<div class="abs" style="left:1216.98px;top:88.70px;width:4.67px;height:1.1px;background:#73935c;opacity:0.62"></div>
<div class="abs" style="left:1221.65px;top:88.70px;width:0.67px;height:1.1px;background:#a8545c;opacity:0.62"></div>
<div class="abs" style="left:1222.31px;top:88.70px;width:8.67px;height:1.1px;background:#7e8490;opacity:0.62"></div>
<div class="abs" style="left:1200.97px;top:90.03px;width:8.67px;height:1.1px;background:#7e8490;opacity:0.62"></div>
<div class="abs" style="left:1199.64px;top:91.37px;width:1.33px;height:1.1px;background:#7e8490;opacity:0.62"></div>
<div class="abs" style="left:1200.97px;top:91.37px;width:4.00px;height:1.1px;background:#4a84b4;opacity:0.62"></div>
<div class="abs" style="left:1204.97px;top:91.37px;width:0.67px;height:1.1px;background:#7e8490;opacity:0.62"></div>
<div class="abs" style="left:1199.64px;top:94.03px;width:0.67px;height:1.1px;background:#7e8490;opacity:0.62"></div>
<div class="abs" style="left:1200.30px;top:94.03px;width:3.33px;height:1.1px;background:#4a84b4;opacity:0.62"></div>
<div class="abs" style="left:1204.31px;top:94.03px;width:2.67px;height:1.1px;background:#73935c;opacity:0.62"></div>
<div class="abs" style="left:1206.97px;top:94.03px;width:0.67px;height:1.1px;background:#a8545c;opacity:0.62"></div>
<div class="abs" style="left:1207.64px;top:94.03px;width:4.00px;height:1.1px;background:#7e8490;opacity:0.62"></div>
<div class="abs" style="left:1212.31px;top:94.03px;width:4.00px;height:1.1px;background:#73935c;opacity:0.62"></div>
<div class="abs" style="left:1216.31px;top:94.03px;width:0.67px;height:1.1px;background:#a8545c;opacity:0.62"></div>
<div class="abs" style="left:1216.98px;top:94.03px;width:9.34px;height:1.1px;background:#7e8490;opacity:0.62"></div>
<div class="abs" style="left:1200.97px;top:95.37px;width:0.67px;height:1.1px;background:#7e8490;opacity:0.62"></div>
<div class="abs" style="left:1201.64px;top:95.37px;width:8.00px;height:1.1px;background:#4a84b4;opacity:0.62"></div>
<div class="abs" style="left:1210.31px;top:95.37px;width:7.34px;height:1.1px;background:#73935c;opacity:0.62"></div>
<div class="abs" style="left:1217.64px;top:95.37px;width:0.67px;height:1.1px;background:#7e8490;opacity:0.62"></div>
<div class="abs" style="left:1202.30px;top:96.70px;width:0.67px;height:1.1px;background:#7e8490;opacity:0.62"></div>
<div class="abs" style="left:1202.97px;top:96.70px;width:7.34px;height:1.1px;background:#4a84b4;opacity:0.62"></div>
<div class="abs" style="left:1210.31px;top:96.70px;width:9.34px;height:1.1px;background:#7e8490;opacity:0.62"></div>
<div class="abs" style="left:1220.31px;top:96.70px;width:5.34px;height:1.1px;background:#7e8490;opacity:0.62"></div>
<div class="abs" style="left:1225.65px;top:96.70px;width:7.34px;height:1.1px;background:#4a84b4;opacity:0.62"></div>
<div class="abs" style="left:1232.99px;top:96.70px;width:0.67px;height:1.1px;background:#7e8490;opacity:0.62"></div>
<div class="abs" style="left:1200.97px;top:98.03px;width:1.33px;height:1.1px;background:#7e8490;opacity:0.62"></div>
<div class="abs" style="left:1202.30px;top:98.03px;width:8.00px;height:1.1px;background:#4a84b4;opacity:0.62"></div>
<div class="abs" style="left:1210.31px;top:98.03px;width:0.67px;height:1.1px;background:#7e8490;opacity:0.62"></div>
<div class="abs" style="left:1200.97px;top:99.37px;width:0.67px;height:1.1px;background:#7e8490;opacity:0.62"></div>
<div class="abs" style="left:1201.64px;top:99.37px;width:6.67px;height:1.1px;background:#4a84b4;opacity:0.62"></div>
<div class="abs" style="left:1208.31px;top:99.37px;width:0.67px;height:1.1px;background:#7e8490;opacity:0.62"></div>
<div class="abs" style="left:1202.30px;top:100.70px;width:0.67px;height:1.1px;background:#7e8490;opacity:0.62"></div>
<div class="abs" style="left:1202.97px;top:100.70px;width:6.00px;height:1.1px;background:#4a84b4;opacity:0.62"></div>
<div class="abs" style="left:1209.64px;top:100.70px;width:1.33px;height:1.1px;background:#73935c;opacity:0.62"></div>
<div class="abs" style="left:1211.64px;top:100.70px;width:0.67px;height:1.1px;background:#a8545c;opacity:0.62"></div>
<div class="abs" style="left:1212.98px;top:100.70px;width:4.00px;height:1.1px;background:#7e8490;opacity:0.62"></div>
<div class="abs" style="left:1200.97px;top:102.03px;width:1.33px;height:1.1px;background:#7e8490;opacity:0.62"></div>
<div class="abs" style="left:1202.30px;top:102.03px;width:6.67px;height:1.1px;background:#4a84b4;opacity:0.62"></div>
<div class="abs" style="left:1208.97px;top:102.03px;width:0.67px;height:1.1px;background:#7e8490;opacity:0.62"></div>
<div class="abs" style="left:1199.64px;top:103.37px;width:1.33px;height:1.1px;background:#7e8490;opacity:0.62"></div>
<div class="abs" style="left:1200.97px;top:103.37px;width:3.33px;height:1.1px;background:#4a84b4;opacity:0.62"></div>
<div class="abs" style="left:1204.31px;top:103.37px;width:0.67px;height:1.1px;background:#7e8490;opacity:0.62"></div>
<div class="abs" style="left:1198.30px;top:104.70px;width:2.00px;height:1.1px;background:#7e8490;opacity:0.62"></div>
<div class="abs" style="left:1196.97px;top:106.03px;width:1.33px;height:1.1px;background:#7e8490;opacity:0.62"></div>
<div class="abs" style="left:1194.30px;top:107.37px;width:1.33px;height:1.1px;background:#7e8490;opacity:0.62"></div>
<div class="abs" style="left:1194.30px;top:108.70px;width:4.00px;height:1.1px;background:#a8545c;opacity:0.62"></div>
<div class="abs" style="left:1198.97px;top:108.70px;width:4.67px;height:1.1px;background:#a8545c;opacity:0.62"></div>
<div class="abs" style="left:1204.31px;top:108.70px;width:7.34px;height:1.1px;background:#7e8490;opacity:0.62"></div>
<div class="abs" style="left:1208px;top:100.50px;width:60px;height:0.8px;background:#385673"></div>
<div class="abs" style="left:1268.3px;top:72.5px;width:1px;height:444px;background:#30353e"></div>
<div class="abs" style="left:1269px;top:72.5px;width:11px;height:225px;background:#3b414d"></div>
<div class="abs" style="left:1269px;top:240.6px;width:11px;height:1.4px;background:#9aa0aa"></div>
</div></div>
<div id="panel" class="abs"><div class="abs" style="left:-219px;top:-517px;width:1280px;height:720px">
<span class="t" style="left:235.00px;top:526.74px;font-size:9.17px;line-height:11.92px;color:#8b919d;transform:scaleX(0.8831);transform-origin:0 50%;">PROBLEMS</span>
<span class="t" style="left:296.50px;top:526.74px;font-size:9.17px;line-height:11.92px;color:#8b919d;transform:scaleX(0.9152);transform-origin:0 50%;">OUTPUT</span>
<span class="t" style="left:347.50px;top:526.74px;font-size:9.17px;line-height:11.92px;color:#8b919d;transform:scaleX(0.8937);transform-origin:0 50%;">DEBUG CONSOLE</span>
<span class="t" style="left:435.60px;top:526.74px;font-size:9.17px;line-height:11.92px;color:#e0e3e8;transform:scaleX(0.9102);transform-origin:0 50%;">TERMINAL</span>
<div class="abs" style="left:435.6px;top:542.6px;width:42.2px;height:1px;background:#a9aeb8"></div>
<div class="abs" style="left:991.2px;top:521.2px;width:141.4px;height:19.6px;background:#1d1f23"></div>
<span class="t" style="left:998.30px;top:524.22px;font-size:10.83px;line-height:14.08px;color:#d0d4dc;letter-spacing:0.095px;word-spacing:-0.095px;">2: node</span>
<svg style="left:0;top:0" width="1" height="1"><path d="M1118.70 529.70 L1122.00 533.00 L1125.30 529.70" fill="none" stroke="#c5c8ce" stroke-width="1.1"/></svg>
<svg style="left:1146.5px;top:525.30px" width="12" height="12" viewBox="0 0 12 12"><path d="M6 0.8 V11.2 M0.8 6 H11.2" stroke="#c5c8ce" stroke-width="1.1"/></svg>
<svg style="left:1173.5px;top:525.30px" width="12" height="12" viewBox="0 0 12 12" fill="none" stroke="#c5c8ce" stroke-width="1.1"><rect x="0.8" y="1" width="10.4" height="10" rx="1"/><path d="M6 1 V11"/></svg>
<svg style="left:1200px;top:525.10px" width="11" height="12" viewBox="0 0 11 12"><path d="M1 2.6 H10 M3.8 2.4 V1.2 H7.2 V2.4" stroke="#c5c8ce" stroke-width="1" fill="none"/><path d="M2 3.6 H9 L8.5 11.2 H2.5 Z" fill="#c5c8ce"/><path d="M4.2 4.8 V10 M6.8 4.8 V10" stroke="#282c34" stroke-width="0.7"/></svg>
<svg style="left:0;top:0;transform:rotate(180deg);transform-origin:1232.5px 531.60px" width="1" height="1"><path d="M1229.04 530.32 L1232.50 533.78 L1235.96 530.32" fill="none" stroke="#c5c8ce" stroke-width="1.1"/></svg>
<svg style="left:1255.2px;top:527.30px" width="8" height="8" viewBox="0 0 8 8"><path d="M0.5 0.5 L7.5 7.5 M7.5 0.5 L0.5 7.5" stroke="#c5c8ce" stroke-width="1.1"/></svg>
<div class="tl" style="left:235.7px;top:548.80px;font-size:11.2px;transform:scaleX(0.8927)">POST /names/[object%20Object] <span class="y">404</span> 7.024 ms - 2</div>
<div class="tl" style="left:235.7px;top:562.13px;font-size:11.2px;transform:scaleX(0.8927)">GET /names <span class="g">200</span> 3.299 ms - 227</div>
<div class="tl" style="left:235.7px;top:575.47px;font-size:11.2px;transform:scaleX(0.8927)">POST /names/[object%20Object] <span class="y">404</span> 6.300 ms - 2</div>
<div class="tl" style="left:235.7px;top:588.80px;font-size:11.2px;transform:scaleX(0.8927)">GET /names <span class="g">200</span> 3.972 ms - 227</div>
<div class="tl" style="left:235.7px;top:602.13px;font-size:11.2px;transform:scaleX(0.8927)">GET /names <span class="g">200</span> 3.634 ms - 227</div>
<div class="tl" style="left:235.7px;top:615.46px;font-size:11.2px;transform:scaleX(0.8927)">GET /names <span class="g">200</span> 4.683 ms - 227</div>
<div class="tl" style="left:235.7px;top:628.80px;font-size:11.2px;transform:scaleX(0.8927)">POST /names/[object%20Object] <span class="y">404</span> 3.237 ms - 2</div>
<div class="tl" style="left:235.7px;top:642.13px;font-size:11.2px;transform:scaleX(0.8927)">GET /names <span class="g">200</span> 2.897 ms - 227</div>
<div class="abs" style="left:235.6px;top:655.66px;width:6px;height:12.4px;border:1px solid #abb2bf"></div>
</div></div>
<div id="status" class="abs"><div class="abs" style="left:0;top:-669px;width:1280px;height:720px">
<svg style="left:12px;top:672.60px" width="10" height="12" viewBox="0 0 10 12" fill="none" stroke="#9da5b4" stroke-width="1"><circle cx="2.3" cy="2.2" r="1.4"/><circle cx="2.3" cy="9.8" r="1.4"/><circle cx="7.8" cy="3.8" r="1.4"/><path d="M2.3 3.6 V8.4 M7.8 5.2 q0 2 -2.6 2.3 q-2.6 0.3 -2.9 1.2"/></svg>
<span class="t" style="left:26.40px;top:670.62px;font-size:10.83px;line-height:14.08px;color:#9da5b4;letter-spacing:-0.459px;">master*</span>
<svg style="left:73.5px;top:673.10px" width="12" height="11" viewBox="0 0 12 11" fill="none" stroke="#9da5b4" stroke-width="1"><path d="M1.3 5 A4.7 4.3 0 0 1 10 3.2 M10.7 6 A4.7 4.3 0 0 1 2 7.8"/><path d="M10.2 0.8 V3.4 H7.6 M1.8 10.2 V7.6 H4.4"/></svg>
<svg style="left:99.5px;top:673.30px" width="11" height="11" viewBox="0 0 11 11" fill="none" stroke="#9da5b4" stroke-width="0.95"><circle cx="5.5" cy="5.5" r="4.6"/><path d="M3.6 3.6 L7.4 7.4 M7.4 3.6 L3.6 7.4"/></svg>
<span class="t" style="left:113.30px;top:671.69px;font-size:10.83px;line-height:14.08px;color:#9da5b4;letter-spacing:-0.022px;">0</span>
<svg style="left:121.8px;top:673.30px" width="12" height="11" viewBox="0 0 12 11" fill="none" stroke="#9da5b4" stroke-width="0.95" stroke-linejoin="round"><path d="M6 1 L11.2 10 H0.8 Z M6 4.2 V7 M6 8 V8.9"/></svg>
<span class="t" style="left:135.50px;top:671.69px;font-size:10.83px;line-height:14.08px;color:#9da5b4;letter-spacing:-0.022px;">0</span>
<span class="t" style="left:862.30px;top:670.62px;font-size:10.83px;line-height:14.08px;color:#9da5b4;letter-spacing:-0.667px;word-spacing:0.667px;">Ln 22, Col 24 (9 selected)</span>
<span class="t" style="left:985.40px;top:670.62px;font-size:10.83px;line-height:14.08px;color:#9da5b4;letter-spacing:-0.858px;word-spacing:0.858px;">Spaces: 2</span>
<span class="t" style="left:1039.40px;top:671.19px;font-size:10.83px;line-height:14.08px;color:#9da5b4;transform:scaleX(0.8638);transform-origin:0 50%;">UTF-8</span>
<span class="t" style="left:1079.60px;top:671.19px;font-size:10.83px;line-height:14.08px;color:#9da5b4;transform:scaleX(0.7673);transform-origin:0 50%;">CRLF</span>
<span class="t" style="left:1114.00px;top:670.62px;font-size:10.83px;line-height:14.08px;color:#9da5b4;letter-spacing:-0.656px;">JavaScript</span>
<svg style="left:1172px;top:672.80px" width="11" height="12" viewBox="0 0 11 12" fill="none" stroke="#9da5b4" stroke-width="0.95"><circle cx="5.5" cy="4.6" r="1.3"/><path d="M3.3 7.4 A3.4 3.4 0 1 1 7.7 7.4 M2 9 A5 5 0 1 1 9 9 M5.5 6 V11.2"/></svg>
<span class="t" style="left:1185.50px;top:670.62px;font-size:10.83px;line-height:14.08px;color:#9da5b4;letter-spacing:-0.804px;word-spacing:0.804px;">Go Live</span>
<svg style="left:1232px;top:673.10px" width="12" height="11" viewBox="0 0 12 11" fill="none" stroke="#9da5b4" stroke-width="0.95" stroke-linejoin="round"><path d="M4.5 0.8 H11.2 V5.4 H8.6 L7.2 6.8 V5.4 H6.6"/><circle cx="3.8" cy="4.6" r="1.7"/><path d="M0.8 10.4 q0.3 -3.6 3 -3.6 q2.7 0 3 3.6"/></svg>
<svg style="left:1258px;top:672.60px" width="11" height="12" viewBox="0 0 11 12" fill="none" stroke="#9da5b4" stroke-width="0.95" stroke-linejoin="round"><path d="M6.6 1.4 Q2.4 1.2 2.4 5 V8 L1.2 9.4 H9.4 L8.4 8 V6.4 M4.4 9.6 q0.9 1.6 1.9 0"/><circle cx="8.6" cy="2.8" r="1.7" fill="#9da5b4" stroke="none"/></svg>
</div></div>
<div id="task" class="abs"><div class="abs" style="left:0;top:-686.7px;width:1280px;height:720px">
<svg style="left:12.8px;top:696.2px" width="14" height="14" viewBox="0 0 14 14" fill="#f5f5f5"><path d="M0 2 L6.2 1.1 V6.6 H0 Z M7 1 L14 0 V6.6 H7 Z M0 7.4 H6.2 V12.9 L0 12 Z M7 7.4 H14 V14 L7 13 Z"/></svg>
<div class="abs" style="left:39.8px;top:686.7px;width:286.7px;height:33.3px;background:#f2f2f2"></div>
<svg style="left:50px;top:696.5px" width="14" height="14" viewBox="0 0 14 14" fill="none" stroke="#2b2b2b" stroke-width="1.1"><circle cx="8.6" cy="5.2" r="4.3"/><path d="M5.6 8.4 L0.6 13.4"/></svg>
<span class="t" style="left:74.00px;top:695.79px;font-size:12.5px;line-height:16.25px;color:#4a4a4a;letter-spacing:-0.136px;word-spacing:0.136px;">Type here to search</span>
<svg style="left:339.5px;top:696.3px" width="15" height="13" viewBox="0 0 15 13" fill="none" stroke="#f0f0f0" stroke-width="1.25"><rect x="0.6" y="3.2" width="8.6" height="6.6"/><path d="M0.6 0.8 H9.2 M0.6 12.2 H9.2 M11.6 0.5 V2.6 M11.6 10.4 V12.5 M11.6 4.4 V8.6"/><rect x="10.6" y="5" width="2" height="3" fill="#f0f0f0" stroke="none"/></svg>
<svg style="left:379.8px;top:693.6px" width="19.2" height="17.4" viewBox="0 0 19 17"><path d="M0.5 1.5 H7 L8.5 3.2 H18.5 V16 H0.5 Z" fill="#f0b429"/><path d="M0.5 5 H18.5 V16 H0.5 Z" fill="#fbd45f"/><path d="M4 10.5 H15 V16 H4 Z" fill="#3a8ee6"/><path d="M6 12.5 H13 V16 H6 Z" fill="#fbd45f"/></svg>
<svg style="left:420.3px;top:692.6px" width="19.6" height="19.6" viewBox="0 0 18 18"><path d="M6 5 V3.2 q0 -2 3 -2 q3 0 3 2 V5" fill="none" stroke="#e8e8e8" stroke-width="1.1"/><path d="M0.8 5 H17.2 V17.5 H0.8 Z" fill="#f3f3f3"/><rect x="5.3" y="7.6" width="3.2" height="3.2" fill="#f25022"/><rect x="9.4" y="7.6" width="3.2" height="3.2" fill="#7fba00"/><rect x="5.3" y="11.7" width="3.2" height="3.2" fill="#00a4ef"/><rect x="9.4" y="11.7" width="3.2" height="3.2" fill="#ffb900"/></svg>
<svg style="left:462.4px;top:693px" width="19.2" height="19.2" viewBox="0 0 20 20"><circle cx="10" cy="10" r="9.6" fill="#e33b2e"/><path d="M10 10 L1.7 5.2 A9.6 9.6 0 0 0 9 19.55 L13.5 12 Z" fill="#2da94f"/><path d="M10 10 L9 19.55 A9.6 9.6 0 0 0 18.3 5.2 H10 Z" fill="#fcc934"/><circle cx="10" cy="10" r="4.4" fill="#f1f1f1"/><circle cx="10" cy="10" r="3.5" fill="#4c8bf5"/></svg>
<svg style="left:502.4px;top:693.2px" width="21.4" height="19.3" viewBox="0 0 20 18"><path d="M1 7 L10 0.6 L19 7 V17.4 H1 Z" fill="#1a73c9"/><path d="M1 7.6 L10 13.2 L19 7.6 V17.4 H1 Z" fill="#33a1ee"/><path d="M1 7.4 L10 13 L19 7.4" fill="none" stroke="#bfe3fb" stroke-width="0.9"/></svg>
<svg style="left:545px;top:693.4px" width="18" height="18" viewBox="0 0 18 18"><path d="M0.8 8.2 C1.2 3.5 4.8 0.8 9.2 0.8 C14.2 0.8 17.2 4.6 17.2 9.2 V10.8 H5.8 C6 13.2 8 14.4 10.6 14.4 C12.6 14.4 14.4 13.8 16 12.8 V16.2 C14.2 17.2 12.2 17.6 10 17.6 C5.4 17.6 2.2 14.8 2.2 10.6 C2.2 8.2 3.4 6 5.4 4.8 C3.2 5.2 1.6 6.6 0.8 8.2 Z M5.8 7.6 H12.6 C12.6 5.4 11.2 4.2 9.4 4.2 C7.4 4.2 6.2 5.6 5.8 7.6 Z" fill="#1f7fe0" fill-rule="evenodd"/></svg>
<svg style="left:586.5px;top:692.8px" width="20" height="20" viewBox="0 0 20 20"><path d="M12 0.2 Q15.5 3 16.8 5.4 L18.6 4.6 Q20.4 9 18.6 13 L10 10 Z" fill="#ffb92e"/><circle cx="10" cy="10.8" r="8.9" fill="#ff9a1f"/><path d="M3 4.5 Q4 8 3.2 10.5 Q3 16 9.5 18.8 Q2 18 1.2 11 Q1 7 3 4.5 Z" fill="#ff5a2b"/><path d="M12.5 0.8 Q14.5 3.5 16.5 5 Q19.5 8 18.8 12 Q17.5 18.5 10.5 19.4 Q15 16.5 15 11.5 Q15 7 12.5 0.8 Z" fill="#ffcf3a"/><circle cx="10" cy="10.6" r="4.4" fill="#8a3fd0"/><circle cx="10.6" cy="10" r="2.6" fill="#5b3fb8"/><path d="M5 6.5 Q8 4.5 11 6.5 Q8.5 7 8 9 Q5.5 9 5 6.5 Z" fill="#ff7a1a"/></svg>
<div class="abs" style="left:617px;top:686.7px;width:41px;height:33.3px;background:#5e5d5b"></div>
<svg style="left:627.2px;top:692.8px" width="20" height="20" viewBox="0 0 100 100"><path d="M71 4 L30 42 L12 28 L4 32 L4 68 L12 72 L30 58 L71 96 L96 84 L96 16 Z M72 29 L72 71 L43 50 Z M12 40 L23 50 L12 60 Z" fill="#1b86d6" fill-rule="evenodd"/><path d="M72 4.5 L96 16 V84 L72 95.5 Z" fill="#33abf6"/></svg>
<svg style="left:669px;top:693px" width="22" height="20" viewBox="0 0 22 20"><circle cx="9.8" cy="9.6" r="9" fill="#2ea6e0"/><path d="M4 9.6 L15 5 L13.2 14.4 L9.6 11.8 L8.2 13.6 L7.8 10.8 Z" fill="#fff"/><rect x="10.2" y="12.2" width="11.6" height="7.6" rx="1.6" fill="#8d8d8d"/></svg>
<span class="t" style="left:681.40px;top:704.83px;font-size:7.0px;line-height:9.10px;color:#ffffff;letter-spacing:0.000px;">02</span>
<div class="abs" style="left:455px;top:718.4px;width:34px;height:1.6px;background:#76b9ed"></div>
<div class="abs" style="left:617px;top:718.4px;width:41px;height:1.6px;background:#76b9ed"></div>
<div class="abs" style="left:662px;top:718.4px;width:34px;height:1.6px;background:#76b9ed"></div>
<svg style="left:1073px;top:699.5px" width="10" height="7" viewBox="0 0 10 7"><path d="M0.6 6 L5 1.2 L9.4 6" fill="none" stroke="#f0f0f0" stroke-width="1"/></svg>
<svg style="left:1091px;top:698px" width="15" height="10" viewBox="0 0 15 10"><path d="M2.5 0.4 V2.4 M0.8 0.8 H4.2" stroke="#f0f0f0" stroke-width="0.9"/><rect x="2" y="2.6" width="11.5" height="6.4" fill="none" stroke="#f0f0f0" stroke-width="0.9"/><rect x="3.4" y="4" width="8.7" height="3.6" fill="#f0f0f0"/><path d="M14.3 4.4 V7.2" stroke="#f0f0f0" stroke-width="0.9"/></svg>
<svg style="left:1112px;top:697.5px" width="14" height="12" viewBox="0 0 14 12" fill="none" stroke="#f0f0f0" stroke-width="0.95"><path d="M1 11 A10 10 0 0 1 12.6 2.4 M3.8 11 A7.2 7.2 0 0 1 11.8 5 M6.6 11 A4.4 4.4 0 0 1 11 7.8"/><circle cx="10.4" cy="10.4" r="1.1" fill="#f0f0f0" stroke="none"/></svg>
<svg style="left:1131px;top:697.5px" width="15" height="12" viewBox="0 0 15 12" fill="none" stroke="#f0f0f0" stroke-width="0.95"><path d="M0.8 4.2 H3 L5.8 1.4 V10.6 L3 7.8 H0.8 Z"/><path d="M7.6 4 q1.4 2 0 4 M9.6 2.6 q2.4 3.4 0 6.8 M11.6 1.2 q3.4 4.8 0 9.6"/></svg>
<span class="t" style="left:1153.90px;top:697.22px;font-size:10.0px;line-height:13.00px;color:#f0f0f0;transform:scaleX(0.8722);transform-origin:0 50%;">ENG</span>
<span class="t" style="left:1195.60px;top:689.41px;font-size:10.0px;line-height:13.00px;color:#f0f0f0;transform:scaleX(0.8792);transform-origin:0 50%;">22:37</span>
<span class="t" style="left:1184.40px;top:705.01px;font-size:10.0px;line-height:13.00px;color:#f0f0f0;transform:scaleX(0.9152);transform-origin:0 50%;">17.08.2020</span>
<svg style="left:1245.5px;top:696.6px" width="15" height="14" viewBox="0 0 15 14"><path d="M0.6 0.6 H12.6 V10 H5.6 L3.2 12.4 V10 H0.6 Z" fill="#f0f0f0"/><path d="M2.6 3 H10.6 M2.6 5 H10.6 M2.6 7 H7.6" stroke="#222" stroke-width="0.8"/><circle cx="11.4" cy="10.4" r="2.7" fill="#bdbdbd" stroke="#0d0d0d" stroke-width="0.8"/><path d="M10.2 10.4 h2.4" stroke="#222" stroke-width="0.7"/></svg>
<div class="abs" style="left:1275.3px;top:686.7px;width:0.8px;height:33.3px;background:#4e4e4e"></div>
</div></div>
</body></html>
